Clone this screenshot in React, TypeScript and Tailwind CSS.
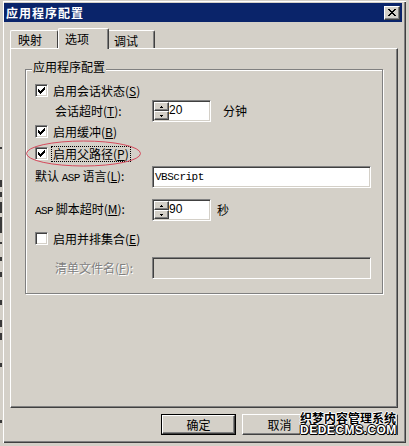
import React from "react";

const SUNKEN =
  "border border-t-[#808080] border-l-[#808080] border-b-white border-r-white shadow-[inset_1px_1px_0_#404040,inset_-1px_-1px_0_#d4d0c8]";
const RAISED =
  "border border-t-white border-l-white border-b-[#404040] border-r-[#404040] shadow-[inset_-1px_-1px_0_#808080]";

const CHECK = [
  "......X",
  ".....XX",
  "X...XXX",
  "XX.XXX.",
  "XXXXX..",
  ".XXX...",
  "..X....",
];
const CLOSE = [
  "XX....XX",
  ".XX..XX.",
  "..XXXX..",
  "...XX...",
  "..XXXX..",
  ".XX..XX.",
  "XX....XX",
];
const UP = ["..X..", ".XXX."];
const DOWN = [".XXX.", "..X.."];

function Bitmap({ rows, color = "#000" }: { rows: string[]; color?: string }) {
  const w = rows[0].length;
  const h = rows.length;
  return (
    <svg width={w} height={h} viewBox={`0 0 ${w} ${h}`} shapeRendering="crispEdges" className="block">
      {rows.flatMap((r, y) =>
        r.split("").map((c, x) =>
          c === "X" ? <rect key={`${x}-${y}`} x={x} y={y} width={1} height={1} fill={color} /> : null
        )
      )}
    </svg>
  );
}

function U({ children }: { children: React.ReactNode }) {
  return <span className="underline underline-offset-[1px]">{children}</span>;
}

function Checkbox({ checked }: { checked?: boolean }) {
  return (
    <span className={`w-[13px] h-[13px] shrink-0 bg-white flex items-center justify-center ${SUNKEN}`}>
      {checked && <Bitmap rows={CHECK} />}
    </span>
  );
}

function SpinBtn({ up }: { up?: boolean }) {
  return (
    <div className={`flex-1 bg-[#d4d0c8] flex items-center justify-center ${RAISED}`}>
      <Bitmap rows={up ? UP : DOWN} />
    </div>
  );
}

function Spin({ value }: { value: string }) {
  return (
    <div className={`w-[59px] h-[22px] bg-white flex p-[1px] shrink-0 ${SUNKEN}`}>
      <div className="w-[15px] flex flex-col">
        <SpinBtn up />
        <SpinBtn />
      </div>
      <div className="pt-[1px] font-['Liberation_Sans',sans-serif] text-[12px] leading-[14px]">{value}</div>
    </div>
  );
}

function Button({ children, def }: { children?: React.ReactNode; def?: boolean }) {
  if (def) {
    return (
      <div className="w-[75px] h-[21px] border border-black flex">
        <div className={`flex-1 bg-[#d4d0c8] flex items-center justify-center ${RAISED}`}>{children}</div>
      </div>
    );
  }
  return (
    <div className={`w-[75px] h-[21px] bg-[#d4d0c8] flex items-center justify-center ${RAISED}`}>{children}</div>
  );
}

const MARKS: [number, number][] = [
  [147, 2],
  [31, 7],
  [5, 5],
  [5, 11],
  [4, 16],
  [9, 2],
  [13, 4],
  [11, 5],
  [23, 5],
  [15, 7],
  [6, 7],
  [23, 4],
  [53, 3],
];

export default function App() {
  return (
    <div className="relative w-[409px] h-[446px] bg-[#d4d0c8] flex overflow-hidden font-['Noto_Sans_CJK_SC','Noto_Sans',sans-serif] text-[12px] leading-[14px] text-black">
      {/* background window remnants on the left */}
      <div className="w-[2px] flex flex-col shrink-0">
        {MARKS.map(([mt, h], i) => (
          <div key={i} className="w-[2px] bg-[#3a3a3a]" style={{ marginTop: mt, height: h }} />
        ))}
      </div>

      {/* window */}
      <div className="w-[404px] h-[443px] shrink-0 flex flex-col pl-[2px] pr-[4px] pt-[3px] bg-[#d4d0c8] shadow-[inset_1px_1px_0_#d4d0c8,inset_2px_2px_0_#ffffff,inset_-1px_-1px_0_#404040,inset_-2px_-2px_0_#808080]">
        {/* title bar */}
        <div className="h-[19px] bg-[#0a246a] flex items-center justify-between pl-[2px] pr-[2px]">
          <span className="text-white font-bold tracking-[1px] text-[12px] leading-[12px]">应用程序配置</span>
          <div className={`w-[16px] h-[14px] bg-[#d4d0c8] flex items-center justify-center ${RAISED}`}>
            <Bitmap rows={CLOSE} />
          </div>
        </div>

        {/* tabs */}
        <div className="mt-[6px] ml-[6px] h-[20px] flex items-end">
          <div className="w-[48px] h-[18px] border-l border-t border-r border-l-white border-t-white border-r-[#404040] rounded-t-[2px] pl-[7px] pt-[3px] leading-[12px]">
            映射
          </div>
          <div className="relative z-10 -mb-px w-[51px] h-[21px] bg-[#d4d0c8] border-l border-t border-r border-l-white border-t-white border-r-[#404040] shadow-[inset_-1px_0_0_#808080] rounded-t-[2px] pl-[6px] pt-[4px] leading-[12px]">
            选项
          </div>
          <div className="w-[46px] h-[18px] border-t border-r border-t-white border-r-[#404040] shadow-[inset_-1px_0_0_#808080] rounded-tr-[2px] pl-[5px] pt-[4px] leading-[12px]">
            调试
          </div>
        </div>

        {/* tab panel */}
        <div className="ml-[6px] w-[388px] h-[360px] border border-t-white border-l-white border-r-[#404040] border-b-[#404040] shadow-[inset_-1px_-1px_0_#808080] pt-[20px] pl-[14px]">
          {/* group box */}
          <div className="relative w-[358px] h-[225px] border border-[#808080] shadow-[1px_1px_0_#ffffff,inset_1px_1px_0_#ffffff] pt-[14px] pl-[9px] flex flex-col">
            <span className="absolute left-[6px] top-[-10px] px-[1px] bg-[#d4d0c8]">应用程序配置</span>

            {/* row 1 */}
            <div className="h-[13px] flex items-center">
              <Checkbox checked />
              <span className="ml-[5px]">
                启用会话状态(<U>S</U>)
              </span>
            </div>

            {/* row 2 */}
            <div className="mt-[3px] h-[22px] flex items-center">
              <span className="w-[117px] pl-[20px] shrink-0">
                会话超时(<U>T</U>):
              </span>
              <Spin value="20" />
              <span className="ml-[12px]">分钟</span>
            </div>

            {/* row 3 */}
            <div className="mt-[3px] h-[13px] flex items-center">
              <Checkbox checked />
              <span className="ml-[5px]">
                启用缓冲(<U>B</U>)
              </span>
            </div>

            {/* row 4 */}
            <div className="relative mt-[9px] h-[13px] flex items-center">
              <Checkbox checked />
              <span className="ml-[3px] h-[16px] px-[1px] border border-dotted border-black flex items-center">
                启用父路径(<U>P</U>)
              </span>
              <svg className="absolute left-[-10px] top-[-8px]" width="120" height="30" viewBox="0 0 120 30">
                <ellipse cx="58.5" cy="14.5" rx="57" ry="12.5" fill="none" stroke="#d44a5c" strokeWidth="1" />
              </svg>
            </div>

            {/* row 5 */}
            <div className="mt-[6px] h-[22px] flex items-center">
              <span className="w-[117px] shrink-0">
                默认 <span className="font-['Liberation_Mono',monospace] text-[11px] tracking-[-0.6px]">ASP</span> 语言(<U>L</U>):
              </span>
              <div className={`w-[219px] h-[22px] bg-white pl-[2px] pt-[3px] font-['Liberation_Mono',monospace] text-[11px] tracking-[-0.5px] leading-[14px] ${SUNKEN}`}>
                VBScript
              </div>
            </div>

            {/* row 6 */}
            <div className="mt-[11px] h-[22px] flex items-center">
              <span className="w-[117px] shrink-0">
                <span className="font-['Liberation_Mono',monospace] text-[11px] tracking-[-0.6px]">ASP</span> 脚本超时(<U>M</U>):
              </span>
              <Spin value="90" />
              <span className="ml-[6px]">秒</span>
            </div>

            {/* row 7 */}
            <div className="mt-[11px] h-[13px] flex items-center">
              <Checkbox />
              <span className="ml-[5px]">
                启用并排集合(<U>E</U>)
              </span>
            </div>

            {/* row 8 */}
            <div className="mt-[12px] h-[22px] flex items-center">
              <span className="w-[117px] pl-[20px] shrink-0 text-[#808080] [text-shadow:1px_1px_0_#ffffff]">
                清单文件名(<U>F</U>):
              </span>
              <div className={`w-[219px] h-[22px] bg-[#d4d0c8] ${SUNKEN}`} />
            </div>
          </div>
        </div>

        {/* buttons */}
        <div className="mt-[6px] ml-[157px] flex gap-[6px]">
          <Button def>确定</Button>
          <Button>取消</Button>
          <Button />
        </div>
      </div>

      {/* watermark overlay */}
      <div className="absolute left-[300px] top-[411px] w-[97px] h-[26px] bg-[#d4d0c8] flex flex-col items-start">
        <span className="font-bold text-[12px] leading-[13px] text-black [text-shadow:1px_0_0_#fff,-1px_0_0_#fff,0_1px_0_#fff,0_-1px_0_#fff]">
          织梦内容管理系统
        </span>
        <span className="font-['Liberation_Sans',sans-serif] font-bold text-[12px] leading-[13px] tracking-[0.5px] text-white [text-shadow:1px_0_0_#000,-1px_0_0_#000,0_1px_0_#000,0_-1px_0_#000,1px_1px_0_#000]">
          DEDECMS.COM
        </span>
      </div>
    </div>
  );
}
